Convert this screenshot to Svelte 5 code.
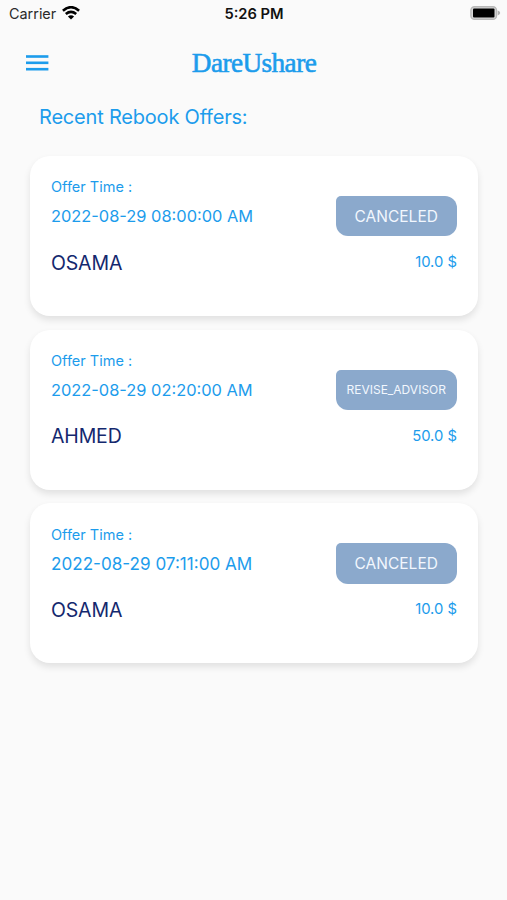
<script>
  const offers = [
    { time: '2022-08-29 08:00:00 AM', name: 'OSAMA', status: 'CANCELED', price: '10.0 $' },
    { time: '2022-08-29 02:20:00 AM', name: 'AHMED', status: 'REVISE_ADVISOR', price: '50.0 $' },
    { time: '2022-08-29 07:11:00 AM', name: 'OSAMA', status: 'CANCELED', price: '10.0 $', roomy: true }
  ];
</script>

<main class="screen">
  <div class="status-bar">
    <div class="carrier">
      <span>Carrier</span>
      <svg class="wifi" width="18" height="14" viewBox="0 0 18 14" fill="none" stroke="#000" stroke-width="2.6">
        <path d="M.9 4.7Q9-2.3 17.1 4.7" />
        <path d="M3.8 8Q9 3.7 14.2 8" />
        <path d="M9 13.6 5.9 10.4Q9 8 12.1 10.4Z" fill="#000" stroke="none" />
      </svg>
    </div>
    <span class="clock">5:26 PM</span>
    <svg class="battery" width="31" height="14" viewBox="0 0 31 14">
      <rect x=".9" y=".7" width="25.6" height="12.6" rx="3.6" fill="#d8d8d8" stroke="#b8b8b8" stroke-width="1.4" />
      <rect x="3" y="2.6" width="21.5" height="8.8" rx="1" fill="#000" />
      <path d="M27.7 4.6Q30.2 5.6 30.2 7T27.7 9.4Z" fill="#b0b0b0" />
    </svg>
  </div>

  <header>
    <button class="menu" aria-label="Menu">
      <svg width="23" height="16" viewBox="0 0 23 16" fill="#1c9cec">
        <rect width="22.4" height="2.6" y=".2" />
        <rect width="22.4" height="2.6" y="6.5" />
        <rect width="22.4" height="2.6" y="12.9" />
      </svg>
    </button>
    <h1>DareUshare</h1>
  </header>

  <h2>Recent Rebook Offers:</h2>

  <div class="list">
    {#each offers as offer}
      <article>
        <div class="info">
          <span class="label">Offer Time :</span>
          <span class="time" class:roomy={offer.roomy}>{offer.time}</span>
          <span class="name">{offer.name}</span>
        </div>
        <div class="side">
          <span class="badge" class:small={offer.status.length > 10}>{offer.status}</span>
          <span class="price">{offer.price}</span>
        </div>
      </article>
    {/each}
  </div>
</main>

<style>
  :global(body) { margin: 0; background: #fafafa; }
  .screen {
    box-sizing: border-box;
    width: 507px;
    height: 900px;
    overflow: hidden;
    background: #fafafa;
    color: #1c9cec;
    font-family: Inter, "Liberation Sans", sans-serif;
    white-space: nowrap;
  }
  .status-bar {
    display: grid;
    grid-template-columns: 1fr auto 1fr;
    align-items: center;
    height: 27px;
    padding: 0 6px 0 9px;
    color: #2a2a2a;
    font-size: 14.4px;
  }
  .carrier { display: flex; align-items: center; gap: 6px; }
  .wifi { margin-top: -1px; }
  .clock { margin-right: 2px; color: #111; font-size: 14.7px; font-weight: 600; }
  .battery { justify-self: end; margin-top: -1px; }
  header {
    display: grid;
    grid-template-columns: 1fr auto 1fr;
    align-items: center;
    height: 71px;
    padding: 0 25px 0 26px;
  }
  .menu { display: flex; width: 23px; padding: 0; border: 0; background: none; }
  .menu svg { margin-top: 1px; }
  h1 {
    margin: 0;
    font: 400 27.2px/32px "Liberation Serif", serif;
    letter-spacing: -.55px;
    -webkit-text-stroke: .6px #1c9cec;
  }
  h2 {
    margin: 3px 0 0 39px;
    font-size: 20px;
    line-height: 32px;
    font-weight: 400;
    letter-spacing: -.2px;
  }
  .list { display: flex; flex-direction: column; gap: 13.7px; padding: 23px 29px 0 30px; }
  article {
    display: flex;
    justify-content: space-between;
    box-sizing: border-box;
    height: 160px;
    padding: 0 21px;
    border-radius: 20px;
    background: #fff;
    box-shadow: 0 4px 7px rgba(0, 0, 0, .1);
  }
  .info { display: flex; flex-direction: column; padding-top: 21.4px; }
  .label { font-size: 14.5px; line-height: 20px; }
  .time { margin-top: 7px; font-size: 16.4px; line-height: 24px; }
  .time.roomy { font-size: 17.1px; }
  .name { margin-top: 20.3px; color: #14286e; font-size: 19.5px; line-height: 29px; letter-spacing: -.15px; }
  .side { display: flex; flex-direction: column; align-items: flex-end; padding-top: 40px; }
  .badge {
    display: flex;
    align-items: center;
    justify-content: center;
    width: 121.5px;
    height: 40.4px;
    border-radius: 5px 12px 12px 12px;
    background: #8ba9cc;
    color: #f2f7fe;
    font-size: 15.5px;
  }
  .badge.small { font-size: 12px; }
  .price { margin-top: 15.6px; font-size: 14.8px; line-height: 20px; }
</style>
